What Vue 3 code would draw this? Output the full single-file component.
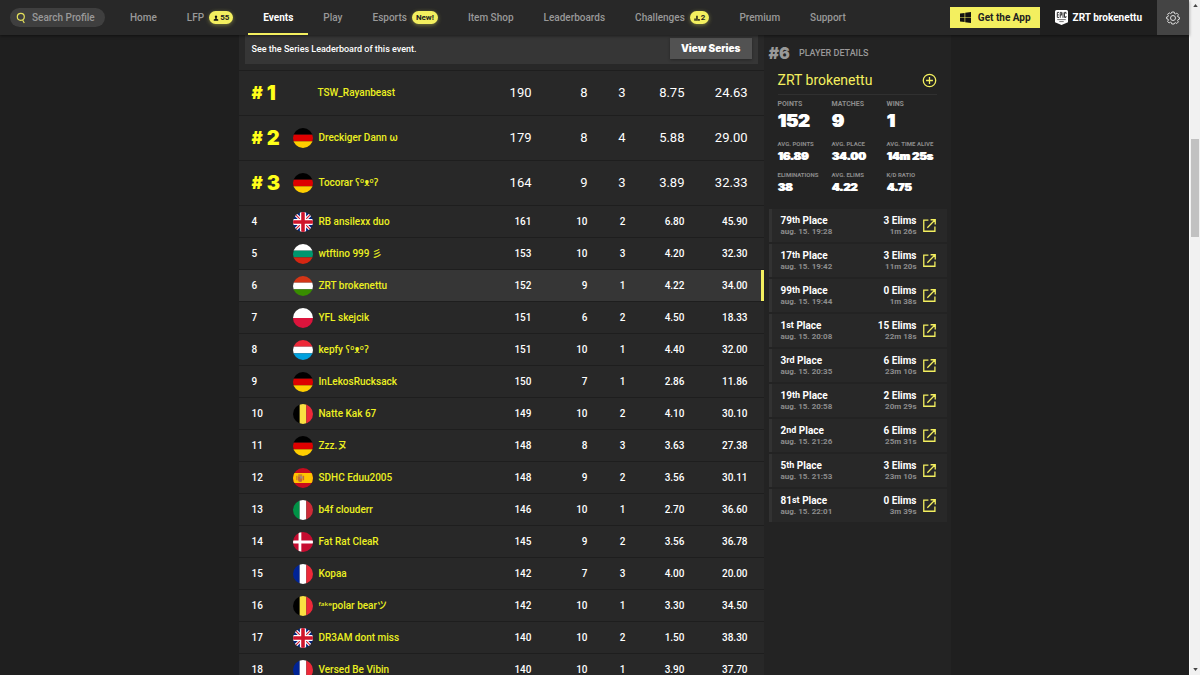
<script setup>
const nav = [
  { label: 'Home' },
  { label: 'LFP', badge: '55', icon: 'user' },
  { label: 'Events', active: true },
  { label: 'Play' },
  { label: 'Esports', badge: 'New!' },
  { label: 'Item Shop' },
  { label: 'Leaderboards' },
  { label: 'Challenges', badge: '2', icon: 'podium' },
  { label: 'Premium' },
  { label: 'Support' },
]

const flags = {
  de: { dir: 'h', colors: ['#000', '#d00', '#ffce00'] },
  bg: { dir: 'h', colors: ['#fff', '#00966e', '#d62612'] },
  hu: { dir: 'h', colors: ['#d43516', '#fff', '#388d00'] },
  pl: { dir: 'h', colors: ['#fff', '#dc143c'] },
  lu: { dir: 'h', colors: ['#ed2939', '#fff', '#00a1de'] },
  be: { dir: 'v', colors: ['#000', '#fae042', '#ed2939'] },
  it: { dir: 'v', colors: ['#009246', '#fff', '#ce2b37'] },
  fr: { dir: 'v', colors: ['#002395', '#fff', '#ed2939'] },
  es: {},
  dk: {},
  gb: {},
}

const stripes = (code) => {
  const { dir, colors } = flags[code]
  if (!colors) return []
  const size = 18 / colors.length
  return colors.map((fill, i) =>
    dir === 'h'
      ? { x: 0, y: i * size, width: 18, height: size, fill }
      : { x: i * size, y: 0, width: size, height: 18, fill },
  )
}

const players = [
  ['', 'TSW_Rayanbeast', '190', '8', '3', '8.75', '24.63'],
  ['de', 'Dreckiger Dann ω', '179', '8', '4', '5.88', '29.00'],
  ['de', 'Tocorar ʕºᴥºʔ', '164', '9', '3', '3.89', '32.33'],
  ['gb', 'RB ansilexx duo', '161', '10', '2', '6.80', '45.90'],
  ['bg', 'wtftino 999 彡', '153', '10', '3', '4.20', '32.30'],
  ['hu', 'ZRT brokenettu', '152', '9', '1', '4.22', '34.00'],
  ['pl', 'YFL skejcik', '151', '6', '2', '4.50', '18.33'],
  ['lu', 'kepfy ʕºᴥºʔ', '151', '10', '1', '4.40', '32.00'],
  ['de', 'InLekosRucksack', '150', '7', '1', '2.86', '11.86'],
  ['be', 'Natte Kak 67', '149', '10', '2', '4.10', '30.10'],
  ['de', 'Zzz.ヌ', '148', '8', '3', '3.63', '27.38'],
  ['es', 'SDHC Eduu2005', '148', '9', '2', '3.56', '30.11'],
  ['it', 'b4f clouderr', '146', '10', '1', '2.70', '36.60'],
  ['dk', 'Fat Rat CleaR', '145', '9', '2', '3.56', '36.78'],
  ['fr', 'Kopaa', '142', '7', '3', '4.00', '20.00'],
  ['be', 'ᶠᵃᵏᵉpolar bearツ', '142', '10', '1', '3.30', '34.50'],
  ['gb', 'DR3AM dont miss', '140', '10', '2', '1.50', '38.30'],
  ['fr', 'Versed Be Vibin', '140', '10', '1', '3.90', '37.70'],
].map(([flag, name, ...stats], i) => ({ rank: i + 1, flag, name, stats }))

const stats = [
  ['Points', '152'], ['Matches', '9'], ['Wins', '1'],
  ['Avg. Points', '16.89'], ['Avg. Place', '34.00'], ['Avg. Time Alive', '14m 25s'],
  ['Eliminations', '38'], ['Avg. Elims', '4.22'], ['K/D Ratio', '4.75'],
]

const matches = [
  ['79', 'th', '19:28', 3, '1m 26s'],
  ['17', 'th', '19:42', 3, '11m 20s'],
  ['99', 'th', '19:44', 0, '1m 38s'],
  ['1', 'st', '20:08', 15, '22m 18s'],
  ['3', 'rd', '20:35', 6, '23m 10s'],
  ['19', 'th', '20:58', 2, '20m 29s'],
  ['2', 'nd', '21:26', 6, '25m 31s'],
  ['5', 'th', '21:53', 3, '23m 10s'],
  ['81', 'st', '22:01', 0, '3m 39s'],
]
</script>

<template>
  <div class="window">
    <div class="page">
      <header class="topbar">
        <label class="search">
          <svg viewBox="0 0 12 12" class="search-icon"><circle cx="5.8" cy="4.8" r="3.500" /><path d="M7.600 8 9.300 11" /></svg>
          <input type="text" placeholder="Search Profile" aria-label="Search Profile" />
        </label>
        <nav class="nav">
          <a v-for="item in nav" :key="item.label" href="#" class="nav-item" :class="{ active: item.active }">
            <span>{{ item.label }}</span>
            <span v-if="item.badge" class="badge">
              <svg v-if="item.icon === 'user'" viewBox="0 0 8 8"><path d="M4 .5a1.7 1.7 0 0 1 1 3l-.2 1.6L7 6v1.5H1V6l2.200-.9L3 3.500a1.700 1.700 0 0 1 1-3z" /></svg>
              <svg v-if="item.icon === 'podium'" viewBox="0 0 8 8"><path d="M.5 4.500h1.800V7.500H.5zM3 1h1.900v6.500H3zM5.600 5.300h2V7.500h-2z" /></svg>
              {{ item.badge }}
            </span>
          </a>
        </nav>
        <a href="#" class="get-app">
          <svg viewBox="0 0 12 12"><path d="M0 1.700 5 1v4.600H0zM5.700.9 12 0v5.600H5.700zM0 6.300h5v4.700L0 10.300zM5.700 6.300H12V12l-6.300-.9z" /></svg>
          Get the App
        </a>
        <a href="#" class="account">
          <svg viewBox="0 0 13 15">
            <path fill="#fff" d="M1.500 0h10A1.500 1.500 0 0 1 13 1.500v10.700L6.500 15 0 12.200V1.500A1.500 1.500 0 0 1 1.500 0z" />
            <path fill="none" stroke="#222" stroke-width=".9" d="M4 2.400H2.300v5H4M2.300 4.900h1.500M5.200 7.800V2.400h1.400v2.700H5.200M8 2.400v5.400M11 4V2.400H9.500v5H11V6" />
            <path stroke="#555" stroke-width=".8" d="M2.200 9.600h8.600M4.300 11.600h4.400" />
          </svg>
          ZRT brokenettu
        </a>
        <button type="button" class="settings" aria-label="Settings">
          <svg viewBox="0 0 14 14">
            <path d="M5.800 1h2.400l.3 1.500 1 .4 1.300-.8 1.600 1.600-.8 1.300.4 1 1.400.3v1.900l-1.400.5-.4 1 .8 1.200-1.600 1.600-1.300-.8-1 .4L8.200 13H5.800l-.4-1.400-1-.4-1.300.8-1.500-1.600.8-1.300-.4-1L.6 7.700V6l1.400-.4.4-1-.8-1.300L3.100 1.800l1.300.8 1-.4z" />
            <circle cx="7" cy="7" r="2.500" />
          </svg>
        </button>
      </header>

      <div class="content">
        <main class="board">
          <div class="series">
            <span>See the Series Leaderboard of this event.</span>
            <button type="button">View Series</button>
          </div>
          <table>
            <colgroup>
              <col class="c-rank" /><col class="c-name" /><col class="c-points" /><col class="c-matches" /><col class="c-wins" /><col class="c-elims" /><col class="c-place" />
            </colgroup>
            <tbody>
              <tr v-for="p in players" :key="p.rank" :class="{ top: p.rank < 4, selected: p.rank === 6 }">
                <th scope="row"><span v-if="p.rank < 4" class="hash">#</span>{{ p.rank }}</th>
                <td class="name">
                  <a href="#">
                    <svg v-if="p.flag" class="flag" viewBox="0 0 18 18">
                      <rect v-for="(s, i) in stripes(p.flag)" :key="i" v-bind="s" />
                      <template v-if="p.flag === 'es'">
                        <path fill="#c60b1e" d="M0 0h18v18H0z" /><path fill="#ffc400" d="M0 4.500h18v9H0z" />
                        <path fill="#c0693a" d="M3 7h1v4H3zM9 7h1v4H9zM4.500 7.500h4v3a2 2 0 0 1-4 0z" />
                        <path fill="#9c8a8a" d="M6.500 7.500h2v2h-2z" /><path fill="#c8862a" d="M4.700 5.600h3.600v1.500H4.700z" />
                      </template>
                      <template v-if="p.flag === 'dk'">
                        <path fill="#c60c30" d="M0 0h18v18H0z" /><path fill="#fff" d="M5 0h2.500v18H5zM0 7.700h18v2.600H0z" />
                      </template>
                      <template v-if="p.flag === 'gb'">
                        <path fill="#00247d" d="M0 0h18v18H0z" />
                        <path stroke="#fff" stroke-width="3" d="M0 0l18 18M18 0 0 18" />
                        <path stroke="#cf142b" stroke-width="1" d="M0 0l18 18M18 0 0 18" />
                        <path stroke="#fff" stroke-width="5.600" d="M9 0v18M0 9h18" />
                        <path stroke="#cf142b" stroke-width="3.200" d="M9 0v18M0 9h18" />
                      </template>
                    </svg>
                    <span v-else class="flag empty"></span>
                    <span>{{ p.name }}</span>
                  </a>
                </td>
                <td v-for="(s, i) in p.stats" :key="i">{{ s }}</td>
              </tr>
            </tbody>
          </table>
        </main>

        <aside class="details">
          <h2><span class="place">#6</span>Player Details</h2>
          <div class="card">
            <div class="who">
              <a href="#">ZRT brokenettu</a>
              <button type="button" aria-label="Add player">
                <svg viewBox="0 0 14 14"><circle cx="7" cy="7" r="5.800" /><path d="M7 3.800v6.400M3.800 7h6.400" /></svg>
              </button>
            </div>
            <dl>
              <div v-for="([label, value], i) in stats" :key="label" :class="{ main: i < 3 }">
                <dt>{{ label }}</dt>
                <dd>{{ value }}</dd>
              </div>
            </dl>
          </div>
          <ul>
            <li v-for="[place, suffix, time, elims, length] in matches" :key="time">
              <div class="result">
                <strong>{{ place }}<span class="suffix">{{ suffix }}</span> Place</strong>
                <small>aug. 15. {{ time }}</small>
              </div>
              <div class="result right">
                <strong>{{ elims }} Elims</strong>
                <small>{{ length }}</small>
              </div>
              <a href="#" aria-label="Open match">
                <svg viewBox="0 0 12 12"><path d="M5 1H.7v10.300H11V7M7 .7h4.300V5M11 1 4 8" /></svg>
              </a>
            </li>
          </ul>
        </aside>
      </div>
    </div>

    <div class="scrollbar">
      <svg viewBox="0 0 6 4"><path d="M0 4 3 0 6 4z" /></svg>
      <div class="track"><div class="before"></div><div class="thumb"></div><div class="after"></div></div>
      <svg viewBox="0 0 6 4"><path d="M0 0 3 4 6 0z" /></svg>
    </div>
  </div>
</template>

<style>
body { background: #1f1f1f; }
</style>

<style scoped>
* { box-sizing: border-box; }
a { color: inherit; text-decoration: none; }
button { border: 0; padding: 0; font: inherit; color: inherit; cursor: pointer; }
svg { display: block; flex: none; }

.window {
  display: flex;
  height: 100vh;
  overflow: hidden;
  background: #1f1f1f;
  color: #fff;
  font: 500 10px/12px Roboto, "Noto Sans", "Noto Sans CJK JP", sans-serif;
}
.page { flex: 1; min-width: 0; display: flex; flex-direction: column; }

.topbar {
  flex: none;
  display: flex;
  align-items: center;
  height: 35px;
  padding-left: 10px;
  background: #282828;
  box-shadow: 0 1px 3px rgba(0, 0, 0, .5);
  z-index: 1;
}
.search {
  display: flex;
  align-items: center;
  gap: 5px;
  width: 95px;
  height: 19px;
  padding-left: 5px;
  border-radius: 10px;
  background: #3f3f3f;
}
.search-icon { width: 12px; height: 12px; fill: none; stroke: #e4e05a; stroke-width: 1.2; }
.search input { width: 70px; padding: 0; border: 0; outline: 0; background: none; color: #fff; font: inherit; }
.search input::placeholder { color: #999; opacity: 1; }
.nav { display: flex; align-self: stretch; margin-left: 10px; flex: 1; }
.nav-item {
  display: flex;
  align-items: center;
  gap: 5px;
  padding: 0 15px;
  border-bottom: 2px solid transparent;
  border-top: 2px solid transparent;
  color: #999;
  white-space: nowrap;
}
.nav-item.active { color: #fff; font-weight: 700; border-bottom-color: #f3ef5f; }
.badge {
  display: flex;
  align-items: center;
  gap: 1px;
  height: 13px;
  padding: 0 4px;
  border-radius: 7px;
  background: #f3ef5f;
  box-shadow: 0 1px 4px rgba(243, 239, 95, .4);
  color: #222;
  font-size: 8px;
  font-weight: 700;
}
.badge svg { width: 6px; height: 6px; fill: #111; }
.get-app {
  display: flex;
  align-items: center;
  gap: 7px;
  height: 21px;
  padding: 0 9px 0 10px;
  background: #f3ef5f;
  color: #222;
  font-weight: 700;
  white-space: nowrap;
}
.get-app svg { width: 11px; height: 11px; fill: #111; }
.account {
  display: flex;
  align-items: center;
  gap: 5px;
  align-self: stretch;
  padding: 0 15px;
  background: #1f1f1f;
  font-weight: 700;
  white-space: nowrap;
}
.account svg { width: 13px; height: 15px; }
.settings { display: flex; align-items: center; justify-content: center; align-self: stretch; width: 32px; background: #444; }
.settings svg { width: 14px; height: 14px; fill: none; stroke: #ddd; }

.content {
  flex: 1;
  min-height: 0;
  display: flex;
  align-items: stretch;
  width: 100%;
  max-width: 712px;
  margin: 0 auto;
  background: #232323;
}
.board { flex: 1; min-width: 0; background: #282828; }
.series {
  display: flex;
  align-items: center;
  justify-content: space-between;
  margin: 0 6px 6px;
  padding: 3px 6px 5px 7px;
  background: #363636;
  font-size: 9px;
}
.series button {
  height: 21px;
  padding: 0 11px;
  background: #525252;
  box-shadow: 0 1px 3px rgba(0, 0, 0, .3);
  font: 900 10px/21px Inter, sans-serif;
}

table { width: 100%; table-layout: fixed; border-collapse: collapse; }
.c-rank { width: 54px; }
.c-points { width: 56px; }
.c-matches { width: 56px; }
.c-wins { width: 38px; }
.c-elims { width: 59px; }
.c-place { width: 79px; }
tr { height: 32px; }
th, td { padding: 0; border-top: 1px solid #1e1e1e; text-align: right; font-weight: 500; white-space: nowrap; }
th { padding-left: 13px; text-align: left; }
td:last-child { padding-right: 16px; }
.name { text-align: left; color: #ecf022; }
.name a { display: flex; align-items: center; gap: 6px; }
.flag { flex: none; width: 20px; height: 20px; border-radius: 50%; }
.empty { width: 19px; }
.top { height: 45px; font-size: 13px; }
.top td { font-weight: 400; }
.top th { color: #ffff1a; font: 900 20px/24px Inter, sans-serif; }
.top .name { font-size: 10px; font-weight: 500; }
.top .hash { margin-right: 4px; font-size: 17px; vertical-align: 1px; }
.selected { background: #363636; }
.selected td:last-child { box-shadow: inset -3px 0 #f3ef5f; }

.details { width: 187px; padding: 0 4px 0 5px; }
.details h2 {
  display: flex;
  align-items: center;
  gap: 9px;
  margin: 8px 0 0;
  color: #999;
  font-size: 9px;
  line-height: 20px;
  font-weight: 500;
  text-transform: uppercase;
}
.place { font: 900 16px/20px Inter, sans-serif; }
.card { padding: 7px 10px 0 9px; }
.who {
  display: flex;
  align-items: center;
  justify-content: space-between;
  padding-bottom: 4px;
  border-bottom: 1px solid #303030;
  color: #f3ef5f;
  font-size: 14px;
  line-height: 20px;
  font-weight: 400;
}
.who button { background: none; }
.who svg { width: 15px; height: 15px; fill: none; stroke: #f3ef5f; stroke-width: 1.2; }
dl { display: grid; grid-template-columns: 54px 55px 1fr; margin: 0; }
dl div { height: 31px; white-space: nowrap; }
dl .main { height: 45px; }
dt { color: #8c8c8c; font-size: 6px; line-height: 8px; font-weight: 700; text-transform: uppercase; }
dd { margin: 0; font: 900 11px/16px Inter, sans-serif; text-shadow: 1px 0 #fff; }
.main dt { padding-top: 4px; font-size: 7px; line-height: 10px; }
.main dd { font-size: 18px; line-height: 24px; }

ul { display: flex; flex-direction: column; gap: 2px; margin: 7px 0 0; padding: 0; list-style: none; }
li {
  display: flex;
  align-items: center;
  gap: 6px;
  height: 33px;
  padding: 0 11px 0 9px;
  border-left: 3px solid #323232;
  background: #282828;
}
.result { flex: 1; display: flex; flex-direction: column; }
.right { text-align: right; }
.result strong { font-size: 10px; line-height: 12px; font-weight: 700; }
.result small { color: #8c8c8c; font-size: 8px; line-height: 10px; font-weight: 700; }
.suffix { position: relative; top: -1px; font-size: 9px; }
li svg { width: 13px; height: 13px; fill: none; stroke: #f3ef5f; stroke-width: 1.2; }

.scrollbar {
  flex: none;
  display: flex;
  flex-direction: column;
  align-items: center;
  width: 11px;
  padding: 4px 0;
  border-left: 1px solid #fff;
  background: #f1f1f1;
}
.scrollbar svg { width: 5px; height: 3px; fill: #444; }
.track { flex: 1; display: flex; flex-direction: column; width: 8px; }
.before { flex: 132; }
.thumb { flex: 98; background: #c1c1c1; }
.after { flex: 431; }
</style>
